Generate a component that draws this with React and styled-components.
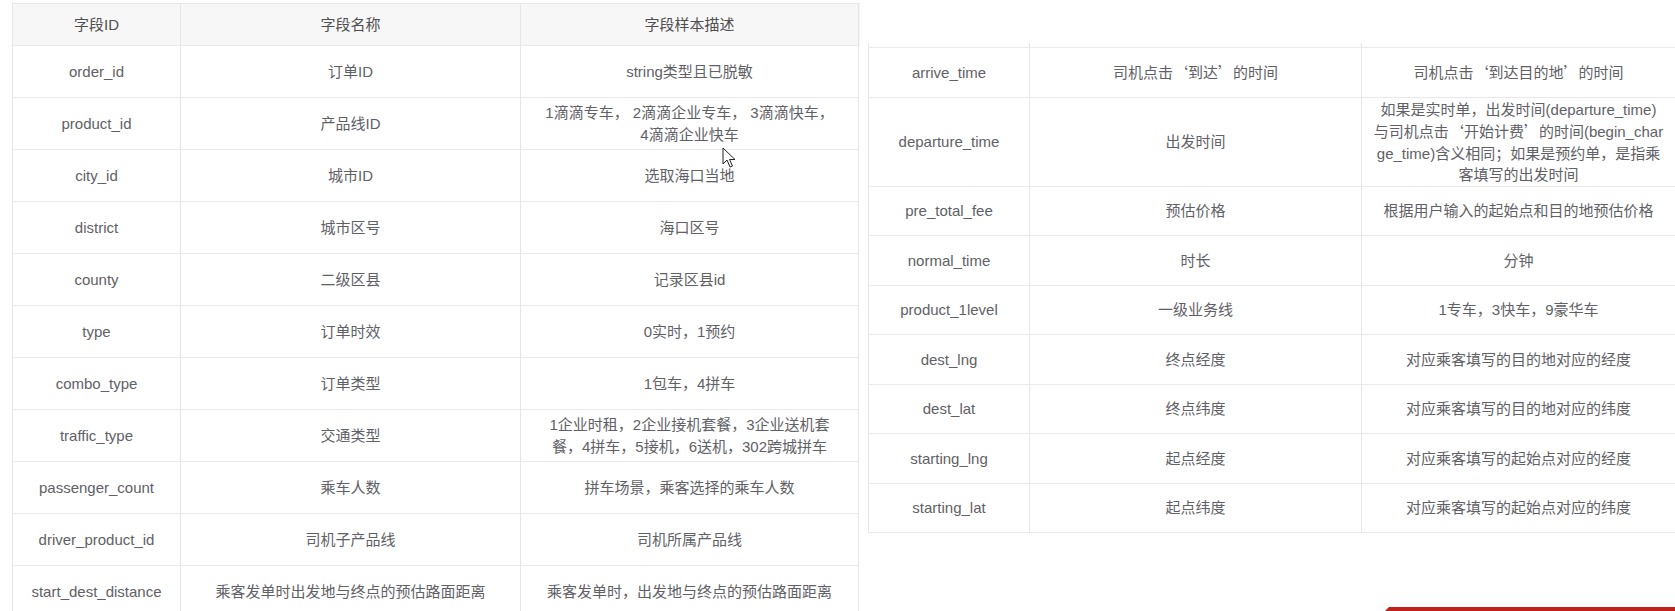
import React from "react";
import styled, { createGlobalStyle } from "styled-components";

const GlobalStyle = createGlobalStyle`
  html, body {
    margin: 0;
    padding: 0;
    background: #ffffff;
  }
  body {
    width: 1675px;
    height: 611px;
    overflow: hidden;
    font-family: "Liberation Sans", "Noto Sans CJK SC", sans-serif;
  }
`;

const Page = styled.div`
  position: relative;
  display: flex;
  align-items: flex-start;
  gap: 8px;
  padding-left: 12px;
  height: 611px;
  overflow: hidden;
`;

const Table = styled.div`
  width: ${(p) => p.width}px;
  margin-top: ${(p) => p.top}px;
  border-left: 1px solid #e6e6e6;
  border-top: ${(p) => (p.open ? "none" : "1px solid #e6e6e6")};
  flex-shrink: 0;
`;

const Row = styled.div`
  display: grid;
  grid-template-columns: ${(p) => p.cols};
  height: ${(p) => p.h}px;
  background: ${(p) => (p.head ? "#f7f7f7" : "#ffffff")};
`;

const Cell = styled.div`
  display: flex;
  flex-direction: column;
  align-items: center;
  justify-content: center;
  text-align: center;
  border-right: 1px solid #e6e6e6;
  border-bottom: 1px solid #e9e9e9;
  color: ${(p) => (p.head ? "#4f4f4f" : "#5f6166")};
  font-size: 15px;
  line-height: 21.5px;
  box-sizing: border-box;
  padding: 0 6px;
  white-space: nowrap;
`;

const Line = styled.span`
  display: block;
`;

const Quote = styled.span`
  font-family: "Noto Sans CJK SC", sans-serif;
`;

const Pointer = styled.svg`
  position: absolute;
  left: 722px;
  top: 147px;
  width: 14px;
  height: 22px;
`;

const RedBar = styled.div`
  position: absolute;
  right: 0;
  bottom: 0;
  width: 290px;
  height: 4px;
  background: #c0211b;
  clip-path: polygon(4px 0, 100% 0, 100% 100%, 0 100%);
`;

function withQuotes(text) {
  return text.split(/([‘’])/).map((part, i) =>
    part === "‘" || part === "’" ? <Quote key={i}>{part}</Quote> : part
  );
}

function Content({ value }) {
  const lines = Array.isArray(value) ? value : [value];
  return lines.map((l, i) => <Line key={i}>{withQuotes(l)}</Line>);
}

const leftCols = "168px 340px 338px";
const rightCols = "161px 332px 314px";

const leftRows = [
  ["order_id", "订单ID", "string类型且已脱敏"],
  ["product_id", "产品线ID", ["1滴滴专车， 2滴滴企业专车， 3滴滴快车，", "4滴滴企业快车"]],
  ["city_id", "城市ID", "选取海口当地"],
  ["district", "城市区号", "海口区号"],
  ["county", "二级区县", "记录区县id"],
  ["type", "订单时效", "0实时，1预约"],
  ["combo_type", "订单类型", "1包车，4拼车"],
  ["traffic_type", "交通类型", ["1企业时租，2企业接机套餐，3企业送机套", "餐，4拼车，5接机，6送机，302跨城拼车"]],
  ["passenger_count", "乘车人数", "拼车场景，乘客选择的乘车人数"],
  ["driver_product_id", "司机子产品线", "司机所属产品线"],
  ["start_dest_distance", "乘客发单时出发地与终点的预估路面距离", "乘客发单时，出发地与终点的预估路面距离"],
];

const rightRows = [
  ["arrive_time", "司机点击‘到达’的时间", "司机点击‘到达目的地’的时间", 50],
  [
    "departure_time",
    "出发时间",
    [
      "如果是实时单，出发时间(departure_time)",
      "与司机点击‘开始计费’的时间(begin_char",
      "ge_time)含义相同；如果是预约单，是指乘",
      "客填写的出发时间",
    ],
    89,
  ],
  ["pre_total_fee", "预估价格", "根据用户输入的起始点和目的地预估价格", 49],
  ["normal_time", "时长", "分钟", 50],
  ["product_1level", "一级业务线", "1专车，3快车，9豪华车", 49],
  ["dest_lng", "终点经度", "对应乘客填写的目的地对应的经度", 50],
  ["dest_lat", "终点纬度", "对应乘客填写的目的地对应的纬度", 49],
  ["starting_lng", "起点经度", "对应乘客填写的起始点对应的经度", 50],
  ["starting_lat", "起点纬度", "对应乘客填写的起始点对应的纬度", 49],
];

export default function App() {
  return (
    <>
      <GlobalStyle />
      <Page>
        <Table width={847} top={3}>
          <Row cols={leftCols} h={42} head>
            <Cell head>字段ID</Cell>
            <Cell head>字段名称</Cell>
            <Cell head>字段样本描述</Cell>
          </Row>
          {leftRows.map((r) => (
            <Row key={r[0]} cols={leftCols} h={52}>
              {r.map((v, i) => (
                <Cell key={i}>
                  <Content value={v} />
                </Cell>
              ))}
            </Row>
          ))}
        </Table>

        <Table width={808} top={43} open>
          <Row cols={rightCols} h={5}>
            <Cell />
            <Cell />
            <Cell />
          </Row>
          {rightRows.map((r) => (
            <Row key={r[0]} cols={rightCols} h={r[3]}>
              {r.slice(0, 3).map((v, i) => (
                <Cell key={i}>
                  <Content value={v} />
                </Cell>
              ))}
            </Row>
          ))}
        </Table>

        <Pointer viewBox="0 0 14 22">
          <path
            d="M1 1 L1 17 L5 13 L8 20 L10.5 19 L7.5 12.5 L13 12.5 Z"
            fill="#ffffff"
            stroke="#222222"
            strokeWidth="1"
            strokeLinejoin="round"
          />
        </Pointer>
        <RedBar />
      </Page>
    </>
  );
}
